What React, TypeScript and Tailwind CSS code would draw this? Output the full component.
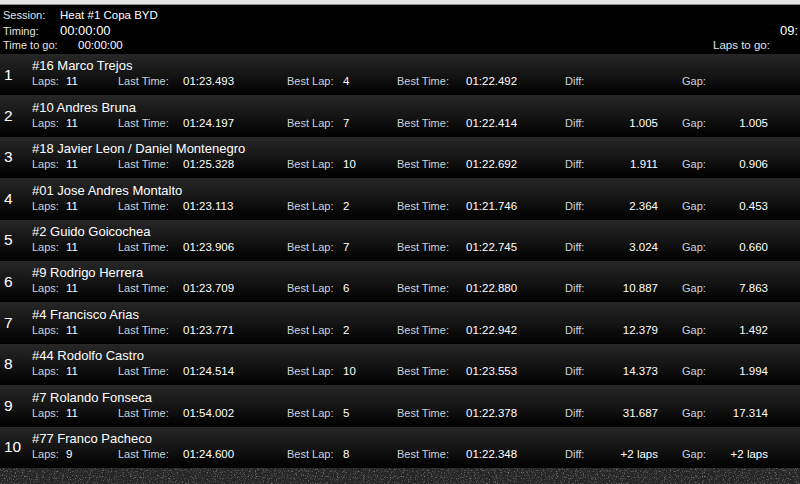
import React from "react";

type Row = {
  pos: number;
  name: string;
  laps: string;
  last: string;
  bestLap: string;
  bestTime: string;
  diff: string;
  gap: string;
};

const rows: Row[] = [
  { pos: 1, name: "#16 Marco Trejos", laps: "11", last: "01:23.493", bestLap: "4", bestTime: "01:22.492", diff: "", gap: "" },
  { pos: 2, name: "#10 Andres Bruna", laps: "11", last: "01:24.197", bestLap: "7", bestTime: "01:22.414", diff: "1.005", gap: "1.005" },
  { pos: 3, name: "#18 Javier Leon / Daniel Montenegro", laps: "11", last: "01:25.328", bestLap: "10", bestTime: "01:22.692", diff: "1.911", gap: "0.906" },
  { pos: 4, name: "#01 Jose Andres Montalto", laps: "11", last: "01:23.113", bestLap: "2", bestTime: "01:21.746", diff: "2.364", gap: "0.453" },
  { pos: 5, name: "#2 Guido Goicochea", laps: "11", last: "01:23.906", bestLap: "7", bestTime: "01:22.745", diff: "3.024", gap: "0.660" },
  { pos: 6, name: "#9 Rodrigo Herrera", laps: "11", last: "01:23.709", bestLap: "6", bestTime: "01:22.880", diff: "10.887", gap: "7.863" },
  { pos: 7, name: "#4 Francisco Arias", laps: "11", last: "01:23.771", bestLap: "2", bestTime: "01:22.942", diff: "12.379", gap: "1.492" },
  { pos: 8, name: "#44 Rodolfo Castro", laps: "11", last: "01:24.514", bestLap: "10", bestTime: "01:23.553", diff: "14.373", gap: "1.994" },
  { pos: 9, name: "#7 Rolando Fonseca", laps: "11", last: "01:54.002", bestLap: "5", bestTime: "01:22.378", diff: "31.687", gap: "17.314" },
  { pos: 10, name: "#77 Franco Pacheco", laps: "9", last: "01:24.600", bestLap: "8", bestTime: "01:22.348", diff: "+2 laps", gap: "+2 laps" },
];

const lbl = "text-[11px] leading-[13px] text-[#cdd2d9] whitespace-nowrap";
const val = "text-[11.5px] leading-[13px] text-white whitespace-nowrap";

function ResultRow({ r }: { r: Row }) {
  return (
    <div className="flex h-[41.4px] shrink-0 border-b border-black bg-linear-to-b from-[#272727] via-[#151515] to-[#030303]">
      <div className="flex w-[32px] items-center pl-[4px] text-[15.5px] leading-[17px] text-white">
        {r.pos}
      </div>
      <div className="flex flex-col pt-[4.4px]">
        <div className="text-[13px] leading-[15px] text-white whitespace-nowrap">{r.name}</div>
        <div className="mt-[2px] flex">
          <div className={`${lbl} w-[34px]`}>Laps:</div>
          <div className={`${val} w-[52px]`}>{r.laps}</div>
          <div className={`${lbl} w-[65px]`}>Last Time:</div>
          <div className={`${val} w-[104px]`}>{r.last}</div>
          <div className={`${lbl} w-[56px]`}>Best Lap:</div>
          <div className={`${val} w-[54px]`}>{r.bestLap}</div>
          <div className={`${lbl} w-[69px]`}>Best Time:</div>
          <div className={`${val} w-[99px]`}>{r.bestTime}</div>
          <div className={`${lbl} w-[40px]`}>Diff:</div>
          <div className={`${val} w-[53px] text-right`}>{r.diff}</div>
          <div className="w-[24px]" />
          <div className={`${lbl} w-[40px]`}>Gap:</div>
          <div className={`${val} w-[46px] text-right`}>{r.gap}</div>
        </div>
      </div>
    </div>
  );
}

export default function App() {
  return (
    <div
      className="relative h-[484px] w-[800px] overflow-hidden bg-[#2c2c2c]"
      style={{ fontFamily: '"Liberation Sans", Arial, Helvetica, sans-serif' }}
    >
      {/* top strip */}
      <div className="h-[4px] bg-[#e4e4e4]" />
      <div className="h-[1px] bg-[#8f8f8f]" />

      {/* header */}
      <div className="h-[49px] bg-black pt-[2.7px]">
        <div className="flex h-[15px] items-baseline">
          <div className="w-[60px] pl-[3px] text-[11px] leading-[15px] text-[#e2e2e2]">Session:</div>
          <div className="text-[11.5px] leading-[15px] text-white whitespace-nowrap">Heat #1 Copa BYD</div>
        </div>
        <div className="flex h-[15px] items-baseline">
          <div className="w-[60px] pl-[3px] text-[11px] leading-[15px] text-[#e2e2e2]">Timing:</div>
          <div className="w-[720px] text-[13px] leading-[15px] text-white">00:00:00</div>
          <div className="text-[13px] leading-[15px] text-white whitespace-nowrap">09:</div>
        </div>
        <div className="flex h-[15px] items-baseline">
          <div className="w-[78px] pl-[3px] text-[11px] leading-[15px] text-[#e2e2e2] whitespace-nowrap">Time to go:</div>
          <div className="w-[635px] text-[11.5px] leading-[15px] text-white">00:00:00</div>
          <div className="text-[11.5px] leading-[15px] text-[#e2e2e2] whitespace-nowrap">Laps to go:</div>
        </div>
      </div>

      {/* rows */}
      <div className="flex flex-col">
        {rows.map((r) => (
          <ResultRow key={r.pos} r={r} />
        ))}
      </div>

      {/* asphalt texture below */}
      <svg className="block h-[20px] w-[800px]" width="800" height="20">
        <filter id="noise">
          <feTurbulence type="fractalNoise" baseFrequency="0.85" numOctaves="2" seed="3" />
          <feColorMatrix
            type="matrix"
            values="0 0 0 0 0.6  0 0 0 0 0.6  0 0 0 0 0.6  1.6 0 0 0 -0.85"
          />
        </filter>
        <rect width="800" height="20" fill="#262626" />
        <rect width="800" height="20" filter="url(#noise)" />
      </svg>
    </div>
  );
}
